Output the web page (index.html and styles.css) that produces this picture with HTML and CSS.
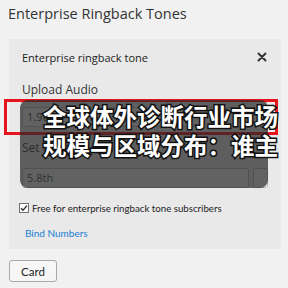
FILE: index.html
```html
<!DOCTYPE html>
<html lang="en">
<head>
  <meta charset="UTF-8" />
  <meta name="viewport" content="width=device-width, initial-scale=1.0"/>
  <title>Enterprise Ringback Tones</title>
  <link rel="stylesheet" href="styles.css">
</head>
<body>
  <h1 class="page-title">Enterprise Ringback Tones</h1>

  <div class="panel">
    <div class="panel-head">
      <span>Enterprise ringback tone</span>
      <svg class="close" width="10" height="10" viewBox="0 0 10 10">
        <path d="M1.5 1.5 L8.5 8.5 M8.5 1.5 L1.5 8.5" stroke="#333" stroke-width="2" stroke-linecap="round"/>
      </svg>
    </div>

    <div class="field-label first">Upload Audio</div>
    <div class="field-row">
      <div class="field-input">1.9th</div>
      <div class="field-side"></div>
    </div>

    <div class="field-label second">Set effective Time</div>
    <div class="field-row">
      <div class="field-input">5.8th</div>
      <div class="field-side"></div>
    </div>

    <div class="check-row">
      <span class="check-box">
        <svg width="8" height="8" viewBox="0 0 8 8">
          <path d="M1 4.2 L3 6.2 L7 1.6" fill="none" stroke="#333" stroke-width="1.4"/>
        </svg>
      </span>
      <span>Free for enterprise ringback tone subscribers</span>
    </div>

    <a class="bind-link" href="#">Bind Numbers</a>
  </div>

  <button class="card-btn">Card</button>

  <!-- overlays -->
  <div class="highlight"></div>
  <div class="caption-box"></div>
  <div class="caption">全球体外诊断行业市场<br>规模与区域分布：谁主</div>
</body>
</html>
```

FILE: styles.css
```css
body {
  margin: 0;
  background-color: #f1f1f1;
  font-family: "Open Sans", "Noto Sans", Arial, sans-serif;
  color: #333;
  position: relative;
  width: 288px;
  height: 288px;
  overflow: hidden;
}
.page-title {
  margin: 0;
  padding: 4px 8px 0 8px;
  height: 39px;
  box-sizing: border-box;
  font-size: 14.5px;
  font-weight: normal;
  color: #333;
}
.panel {
  margin: 0 7px 0 9px;
  background-color: #e9e9e9;
  padding: 8px 13px 0 13px;
  height: 210px;
  box-sizing: border-box;
}
.panel-head {
  display: flex;
  justify-content: space-between;
  align-items: center;
  height: 20px;
  font-size: 11px;
  color: #222;
}
.close { margin-right: 1px; }
.field-label {
  font-size: 12px;
  color: #333;
  height: 18px;
  line-height: 18px;
}
.field-label.first { margin-top: 14px; }
.field-label.second { margin-top: 12px; }
.field-row {
  display: flex;
  gap: 4px;
  margin-top: 8px;
  height: 20px;
}
.field-label.second + .field-row { margin-top: 11px; }
.field-input {
  flex: 1;
  border: 1px solid #bcbcbc;
  border-radius: 2px;
  background-color: #f7f7f7;
  font-size: 11px;
  line-height: 18px;
  padding-left: 4px;
  color: #444;
}
.field-side {
  width: 13px;
  border: 1px solid #bcbcbc;
  border-radius: 2px;
  background-color: #f7f7f7;
}
.check-row {
  display: flex;
  align-items: center;
  gap: 3px;
  margin-top: 13px;
  height: 14px;
  margin-left: -3px;
  font-family: Lato, "Open Sans", sans-serif;
  font-size: 9.7px;
  color: #222;
}
.check-box {
  width: 8px;
  height: 8px;
  border: 1px solid #707070;
  background-color: #fff;
  display: flex;
  align-items: center;
  justify-content: center;
}
.bind-link {
  display: block;
  margin: 11px 0 0 3px;
  height: 14px;
  line-height: 14px;
  font-family: Lato, "Open Sans", sans-serif;
  font-size: 10px;
  color: #1a7fd4;
  text-decoration: none;
}
.card-btn {
  margin: 11px 0 0 9px;
  width: 48px;
  height: 22px;
  border: 1px solid #a9a9a9;
  border-radius: 3px;
  background-color: #f6f6f6;
  font-family: Lato, "Open Sans", sans-serif;
  font-size: 11.5px;
  color: #222;
  padding: 0;
}
.highlight {
  position: absolute;
  left: 4px;
  top: 99px;
  width: 268px;
  height: 30px;
  border: 3px solid #e8141b;
}
.caption-box {
  position: absolute;
  left: 20px;
  top: 100px;
  width: 248px;
  height: 88px;
  border-radius: 8px;
  background-color: rgba(40, 40, 40, 0.72);
}
.caption {
  position: absolute;
  left: 43px;
  top: 102px;
  font-family: "Noto Sans CJK SC", sans-serif;
  font-weight: bold;
  font-size: 23.5px;
  line-height: 29px;
  color: #fff;
  white-space: nowrap;
  -webkit-text-stroke: 3px #111;
  paint-order: stroke fill;
}
```
